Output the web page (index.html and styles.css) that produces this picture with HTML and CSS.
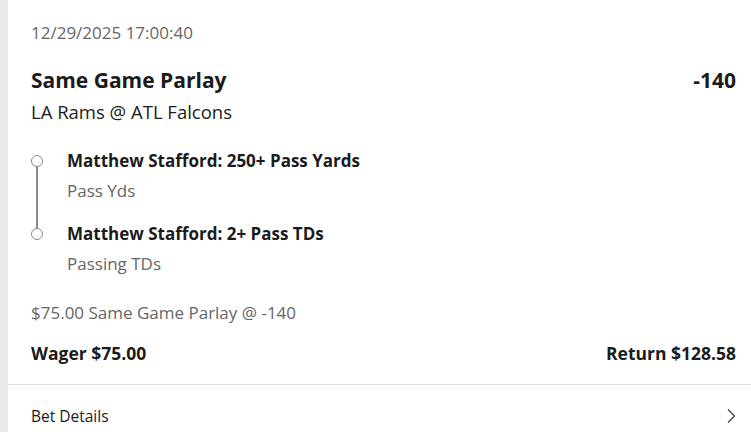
FILE: index.html
```html
<!DOCTYPE html>
<html>
<head>
<meta charset="utf-8">
<link rel="stylesheet" href="styles.css">
</head>
<body>
<div class="page">
  <div class="strip"></div>
  <div class="card">
    <div class="main">
      <div class="date">12/29/2025 17:00:40</div>
      <div class="title-row">
        <div class="title">Same Game Parlay</div>
        <div class="odds">-140</div>
      </div>
      <div class="game">LA Rams @ ATL Falcons</div>
      <div class="legs">
        <div class="leg">
          <div class="marker first"><span class="dot"></span></div>
          <div class="leg-text">
            <div class="leg-title">Matthew Stafford: 250+ Pass Yards</div>
            <div class="leg-sub">Pass Yds</div>
          </div>
        </div>
        <div class="leg">
          <div class="marker last"><span class="dot"></span></div>
          <div class="leg-text">
            <div class="leg-title">Matthew Stafford: 2+ Pass TDs</div>
            <div class="leg-sub">Passing TDs</div>
          </div>
        </div>
      </div>
      <div class="summary">$75.00 Same Game Parlay @ -140</div>
      <div class="totals">
        <div>Wager $75.00</div>
        <div>Return $128.58</div>
      </div>
    </div>
    <div class="details">
      <div>Bet Details</div>
      <svg class="chev" width="10" height="16" viewBox="0 0 10 16"><path d="M2 1.5 L8.5 8 L2 14.5" fill="none" stroke="#444" stroke-width="1.3"/></svg>
    </div>
  </div>
</div>
</body>
</html>
```

FILE: styles.css
```css
html, body { margin: 0; padding: 0; background: #fff; }
body { font-family: "Open Sans", "Noto Sans", sans-serif; color: #1b1b1b; }
.page { display: flex; width: 751px; height: 432px; overflow: hidden; }
.strip { width: 8px; background: #e9eaea; flex: none; }
.card { flex: 1; display: flex; flex-direction: column; }
.main { padding: 20px 15px 0 23px; border-bottom: 1px solid #dedede; height: 385px; box-sizing: border-box; flex: none; }
.date { font-size: 17px; color: #666; line-height: 26px; }
.title-row { display: flex; justify-content: space-between; margin-top: 19px; line-height: 30px; }
.title { font-size: 21px; font-weight: 700; }
.odds { font-size: 21px; font-weight: 700; }
.game { font-size: 18.5px; line-height: 34px; }
.legs { margin-top: 18px; }
.leg { display: flex; height: 73px; }
.marker { width: 36px; flex: none; position: relative; }
.dot { position: absolute; left: 0; top: 8px; width: 12px; height: 12px; border: 1px solid #8a8a8a; border-radius: 50%; background: #fff; box-sizing: border-box; }
.marker.first::after { content: ""; position: absolute; left: 5px; top: 20px; width: 2px; height: 62px; background: #8a8a8a; }
.leg-title { font-size: 17px; font-weight: 700; line-height: 28px; }
.leg-sub { font-size: 17px; color: #666; line-height: 28px; margin-top: 2px; }
.summary { font-size: 17px; color: #666; line-height: 26px; margin-top: 7px; }
.totals { display: flex; justify-content: space-between; font-size: 17.5px; font-weight: 700; line-height: 28px; margin-top: 13px; }
.details { display: flex; justify-content: space-between; align-items: center; padding: 0 15px 0 23px; height: 62px; flex: none; font-size: 15.5px; }
```
